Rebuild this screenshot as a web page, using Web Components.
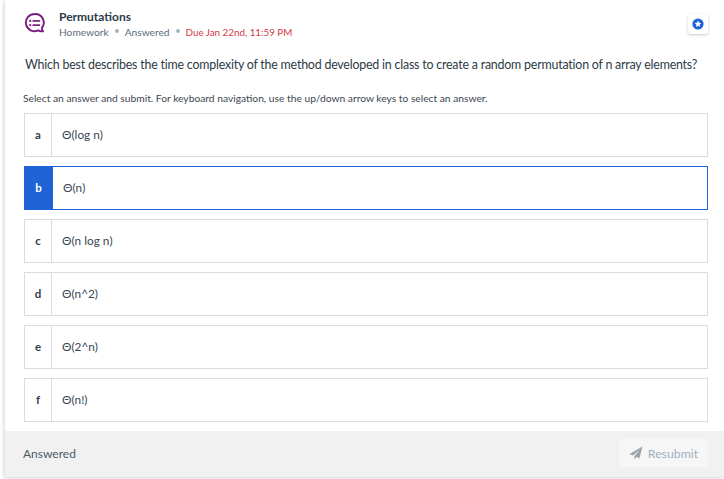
<!DOCTYPE html>
<html><head><meta charset="utf-8"><style>
html,body{margin:0;padding:0;background:#fff;height:479px;overflow:hidden}
body{font-family:Lato,"Liberation Sans",sans-serif}
</style></head><body>
<q-card>
  <q-header slot="header"></q-header>
  <div slot="question">Which best describes the time complexity of the method developed in class to create a random permutation of n array elements?</div>
  <div slot="hint">Select an answer and submit. For keyboard navigation, use the up/down arrow keys to select an answer.</div>
  <q-option letter="a">Θ(log n)</q-option>
  <q-option letter="b" selected>Θ(n)</q-option>
  <q-option letter="c">Θ(n log n)</q-option>
  <q-option letter="d">Θ(n^2)</q-option>
  <q-option letter="e">Θ(2^n)</q-option>
  <q-option letter="f">Θ(n!)</q-option>
  <q-footer slot="footer"></q-footer>
</q-card>
<script>
function def(name,html,init){customElements.define(name,class extends HTMLElement{
  constructor(){super();this.attachShadow({mode:'open'}).innerHTML=html;}
  connectedCallback(){init&&init(this);}
});}
def('q-card',`<style>
:host{display:flex;flex-direction:column;width:719px;height:477px;margin-left:5px;background:#fff;box-shadow:-1px 1px 4px rgba(0,0,0,.18);box-sizing:border-box}
.body{flex:1;padding:9px 16px 0 19px;display:flex;flex-direction:column}
.q{font-size:12.4px;letter-spacing:-.2px;line-height:20px;color:#2d3a45;margin:16px 0 0 1px;white-space:nowrap}
.h{font-size:10.25px;line-height:14px;color:#3b4650;margin:16px 0 8px -1px;white-space:nowrap}
.opts{display:flex;flex-direction:column;gap:9px;margin-top:0}
</style><div class="body"><slot name="header"></slot><div class="q"><slot name="question"></slot></div><div class="h"><slot name="hint"></slot></div><div class="opts"><slot></slot></div></div><slot name="footer"></slot>`);
def('q-header',`<style>
:host{display:flex;align-items:flex-start;height:30px}
.ic{margin:3px 0 0 0;width:22px;height:22px;flex:none}
.t{margin-left:13px;margin-top:0}
.title{font-size:12px;font-weight:700;line-height:16px;color:#2b3a48}
.meta{display:flex;align-items:center;font-size:10.2px;line-height:16px;color:#5a6b7b;margin-top:-1px}
.dot{width:4px;height:4px;border-radius:50%;background:#a3b2bf;margin:-2px 6px 0 6px}
.due{color:#d0393f;font-size:9.8px}
.star{margin-left:auto;margin-right:0;margin-top:5px;width:20px;height:20px;background:#fff;border-radius:3px;box-shadow:0 1px 3px rgba(0,0,0,.22);display:flex;align-items:center;justify-content:center}
</style>
<svg class="ic" viewBox="0 0 22 22" fill="none"><path d="M10.500 2a8.600 8.600 0 1 0 3.600 16.400c1.200.8 3 1.100 5 .8-.9-.8-1.300-1.800-1.200-3.300A8.600 8.600 0 0 0 10.500 2z" stroke="#7b1f7f" stroke-width="1.900" stroke-linejoin="round"/><g fill="#7b1f7f"><rect x="5.100" y="7.800" width="2.200" height="2.200" rx="1"/><rect x="5.100" y="12" width="2.200" height="2.200" rx="1"/><rect x="8.500" y="8.100" width="7.600" height="1.700"/><rect x="8.500" y="12.300" width="7.600" height="1.700"/></g></svg>
<div class="t"><div class="title">Permutations</div><div class="meta"><span>Homework</span><span class="dot"></span><span>Answered</span><span class="dot"></span><span class="due">Due Jan 22nd, 11:59 PM</span></div></div>
<div class="star"><svg width="12" height="12" viewBox="0 0 12 12"><circle cx="6" cy="6" r="5.600" fill="#1f63d6"/><path d="M6 2.600l1 2.100 2.300.3-1.700 1.600.4 2.300L6 7.800 4 8.900l.4-2.300L2.700 5l2.300-.3z" fill="#fff"/></svg></div>`);
def('q-option',`<style>
:host{display:flex;height:44px;box-sizing:border-box;border:1px solid #dcdcdc;background:#fff;font-size:11.8px;color:#3a4753}
.l{width:26px;flex:none;border-right:1px solid #dcdcdc;display:flex;align-items:center;justify-content:center;font-weight:700;font-size:11.5px;color:#33404c;padding-bottom:2px;box-sizing:content-box}
.c{padding-left:10px;padding-bottom:2px;display:flex;align-items:center}
:host([selected]){border-color:#1f63d6}
:host([selected]) .l{background:#1f63d6;border-right-color:#1f63d6;color:#fff;width:27px}
</style><div class="l"></div><div class="c"><slot></slot></div>`,el=>{el.shadowRoot.querySelector('.l').textContent=el.getAttribute('letter');});
def('q-footer',`<style>
:host{display:flex;align-items:center;justify-content:space-between;height:46px;background:#f1f1f1;padding:0 16px 2px 18px;box-sizing:border-box;flex:none;margin-top:auto}
.a{font-size:12px;color:#4a5b6c}
.b{display:flex;align-items:center;gap:5px;width:89px;height:28px;justify-content:center;background:#f6f6f6;border-radius:3px;font-size:12.3px;color:#9fb2c4}
</style><span class="a">Answered</span><span class="b"><svg width="14" height="14" viewBox="0 0 14 14"><path d="M13.500.5L.5 8l3.600 1.500L11 3.500 5.500 10.200v3.300l2-2.500 3 1.300z" fill="#98a3ad"/></svg><span>Resubmit</span></span>`);
</script>
</body></html>
